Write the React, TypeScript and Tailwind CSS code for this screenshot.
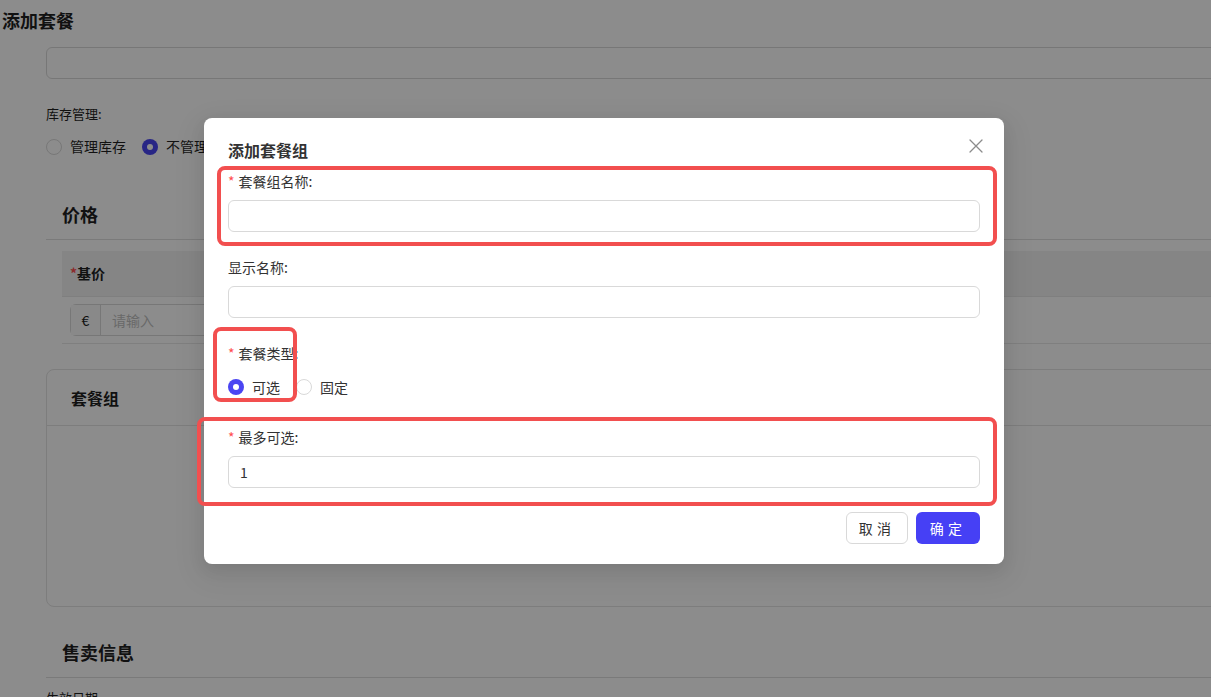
import React from 'react'

const font = 'font-["Noto_Sans_CJK_SC","Noto_Sans",sans-serif]'

function Required() {
  return <span className="mr-1 text-[14px] leading-none text-[#ff4d4f]">*</span>
}

function Label({ required, children }: { required?: boolean; children: React.ReactNode }) {
  return (
    <div className="flex h-[30px] items-start pb-2">
      <div className="flex h-[22px] items-center text-[14px] text-[#333]">
        {required && <Required />}
        <span>{children}</span>
      </div>
    </div>
  )
}

function TextInput({ value }: { value?: string }) {
  return (
    <div className="flex h-8 w-full items-center rounded-md border border-[#d9d9d9] bg-white px-[11px] text-[14px] text-[#333]">
      {value}
    </div>
  )
}

function Radio({ checked, label }: { checked?: boolean; label: string }) {
  return (
    <div className="mr-2 flex items-center">
      {checked ? (
        <span className="flex h-4 w-4 items-center justify-center rounded-full bg-[#4a45f2]">
          <span className="h-[6px] w-[6px] rounded-full bg-white" />
        </span>
      ) : (
        <span className="h-4 w-4 rounded-full border border-[#d9d9d9] bg-white" />
      )}
      <span className="px-2 text-[14px] text-[#333]">{label}</span>
    </div>
  )
}

function BackgroundPage() {
  return (
    <div className="text-[#1f1f1f]">
      <h1 className="pl-[2px] pt-2 text-[18px] font-bold leading-6">添加套餐</h1>
      <div className="ml-[46px] w-[1250px]">
        <div className="mt-[15px] h-8 rounded-md border border-[#d9d9d9]" />
        <div className="mt-6 text-[13px] leading-[22px]">库存管理:</div>
        <div className="mt-[11px] flex items-center gap-4 text-[14px]">
          <div className="flex items-center gap-2">
            <span className="h-4 w-4 rounded-full border border-[#d9d9d9]" />
            管理库存
          </div>
          <div className="flex items-center gap-2">
            <span className="flex h-4 w-4 items-center justify-center rounded-full bg-[#4a45f2]">
              <span className="h-[6px] w-[6px] rounded-full bg-white" />
            </span>
            不管理库存
          </div>
        </div>

        <div className="mt-8 flex h-[51px] items-center border-b border-[#dedede] pl-4 text-[18px] font-bold">
          价格
        </div>
        <div className="ml-4 mt-[11px]">
          <div className="flex h-[46px] items-center border-b border-[#e8e8e8] bg-[#f2f2f2] pl-2 text-[14px] font-bold">
            <span className="text-[#ff4d4f]">*</span>基价
          </div>
          <div className="flex h-[47px] items-center border-b border-[#e8e8e8] pl-2">
            <div className="flex h-8 w-[300px] rounded-md border border-[#d9d9d9] text-[14px]">
              <span className="flex w-[30px] items-center justify-center border-r border-[#d9d9d9] bg-[#fafafa]">€</span>
              <span className="flex items-center px-[11px] text-[#bfbfbf]">请输入</span>
            </div>
          </div>
        </div>

        <div className="mt-[25px] h-[238px] rounded-lg border border-[#e3e3e3]">
          <div className="flex h-[56px] items-center border-b border-[#e3e3e3] pl-6 text-[16px] font-bold">套餐组</div>
        </div>

        <div className="mt-[21px] flex h-[50px] items-center border-b border-[#dedede] pl-4 text-[18px] font-bold">
          售卖信息
        </div>
        <div className="mt-[10px] text-[13px]">生效日期</div>
      </div>
    </div>
  )
}

function Modal() {
  return (
    <div className="relative w-[800px] rounded-lg bg-white px-6 pb-5 pt-5 shadow-[0_6px_16px_rgba(0,0,0,0.08),0_9px_28px_8px_rgba(0,0,0,0.05)]">
      <button className="absolute right-[21px] top-[21px] flex h-[14px] w-[14px] items-center justify-center text-[#8c8c8c]">
        <svg width="14" height="14" viewBox="0 0 14 14" fill="none">
          <path d="M1 1l12 12M13 1L1 13" stroke="currentColor" strokeWidth="1.3" strokeLinecap="round" />
        </svg>
      </button>
      <div className="mb-2 h-6 text-[16px] font-bold leading-6 text-[#333]">添加套餐组</div>

      <div className="mb-6">
        <Label required>套餐组名称:</Label>
        <TextInput />
      </div>
      <div className="mb-6">
        <Label>显示名称:</Label>
        <TextInput />
      </div>
      <div className="mb-6">
        <Label required>套餐类型:</Label>
        <div className="flex h-[30px] items-center">
          <Radio checked label="可选" />
          <Radio label="固定" />
        </div>
      </div>
      <div className="mb-6">
        <Label required>最多可选:</Label>
        <TextInput value="1" />
      </div>

      <div className="flex justify-end gap-2">
        <button className="h-8 w-[62px] rounded-md border border-[#d9d9d9] bg-white text-[14px] tracking-[0.3em] text-[#333]">
          取消
        </button>
        <button className="h-8 w-16 rounded-md bg-[#4640f5] text-[14px] tracking-[0.3em] text-white">确定</button>
      </div>

      {/* annotation boxes */}
      <div className="pointer-events-none absolute left-[13px] top-[48px] h-[80px] w-[780px] rounded-lg border-4 border-[#f24f4f]" />
      <div className="pointer-events-none absolute left-[9px] top-[209px] h-[75px] w-[84px] rounded-lg border-4 border-[#f24f4f]" />
      <div className="pointer-events-none absolute left-[-7px] top-[299px] h-[89px] w-[800px] rounded-lg border-4 border-[#f24f4f]" />
    </div>
  )
}

export default function App() {
  return (
    <div className={`relative h-[697px] w-full overflow-hidden bg-white ${font}`}>
      <BackgroundPage />
      <div className="absolute inset-0 bg-black/45 pl-[204px] pt-[118px]">
        <Modal />
      </div>
    </div>
  )
}
